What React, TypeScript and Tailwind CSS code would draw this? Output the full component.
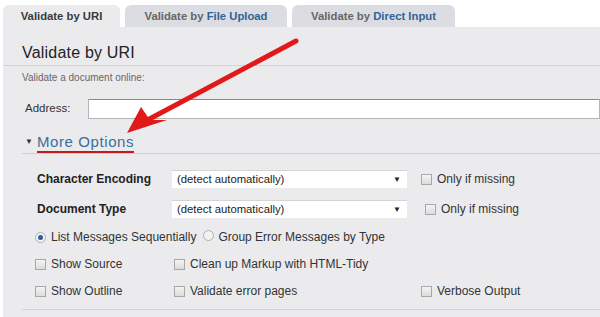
import React from "react";

const Checkbox = () => (
	<span className="inline-block w-[11px] h-[11px] border border-[#a8a8a8] bg-gradient-to-b from-[#f4f4f4] to-[#dcdcdc] shrink-0" />
);

const Radio = ({checked}: {checked?: boolean}) => (
	<span className="inline-flex items-center justify-center w-[11px] h-[11px] rounded-full border border-[#b0b0b0] bg-[#f2f2f2] shrink-0">
		{checked && <span className="w-[5px] h-[5px] rounded-full bg-[#2d5f9a]" />}
	</span>
);

const Select = () => (
	<div className="w-[235px] h-[18px] bg-white border-t border-[#d4d4d4] flex items-center justify-between pl-[5px] pr-[6px] text-[11.3px] text-[#222]">
		<span>(detect automatically)</span>
		<span className="text-[8px] leading-none">▼</span>
	</div>
);

export default function App() {
	return (
		<div className="relative w-[600px] h-[317px] overflow-hidden bg-white font-['Liberation_Sans',Arial,sans-serif]">
			{/* Tabs */}
			<div className="flex gap-[5px] pl-[3px] pt-[5px] h-[27px] text-[11.3px] font-bold">
				<div className="w-[117px] bg-[#ebebee] rounded-t-[6px] flex items-center justify-center text-[#3a3a3a]">
					Validate by URI
				</div>
				<div className="w-[162px] bg-[#dcdde2] rounded-t-[6px] flex items-center justify-center text-[#666]">
					Validate by&nbsp;<span className="text-[#2f6496]">File Upload</span>
				</div>
				<div className="w-[163px] bg-[#dcdde2] rounded-t-[6px] flex items-center justify-center text-[#666]">
					Validate by&nbsp;<span className="text-[#2f6496]">Direct Input</span>
				</div>
			</div>

			{/* Panel */}
			<div className="ml-[3px] h-[290px] bg-[#ebebee] pt-[16px]">
				<div className="border-b border-[#d3d3d8] pb-[2px] pl-[19px]">
					<h1 className="text-[16px] leading-[20px] text-[#222] tracking-[0.2px]">Validate by URI</h1>
				</div>
				<p className="pl-[19px] mt-[7px] text-[10px] leading-[10px] text-[#666]">
					Validate a document online:
				</p>

				<div className="flex items-center mt-[16px] h-[20px]">
					<span className="pl-[22px] w-[85px] text-[11.5px] text-[#333]">Address:</span>
					<div className="flex-1 h-[20px] bg-white border border-[#b5b5b5] border-t-[#8a8a8a]" />
				</div>

				<div className="ml-[19px] mt-[15px] border-b border-[#cfcfd4] flex items-end h-[20px]">
					<span className="ml-[3px] mb-[7px] text-[8px] text-[#333] leading-none">▼</span>
					<span className="ml-[4px] text-[15px] leading-[16px] text-[#3b6d9b] border-b-2 border-[#c41a1a] pb-[1px] tracking-[0.6px]">
						More Options
					</span>
				</div>

				{/* Options */}
				<div className="mt-[16px] text-[12px] text-[#333]">
					<div className="flex items-center h-[18px] pl-[34px]">
						<span className="w-[135px] font-bold text-[#222]">Character Encoding</span>
						<Select />
						<div className="ml-[14px] flex items-center gap-[5px]">
							<Checkbox />
							<span>Only if missing</span>
						</div>
					</div>
					<div className="flex items-center h-[18px] pl-[34px] mt-[12px]">
						<span className="w-[135px] font-bold text-[#222]">Document Type</span>
						<Select />
						<div className="ml-[18px] flex items-center gap-[5px]">
							<Checkbox />
							<span>Only if missing</span>
						</div>
					</div>

					<div className="flex items-center h-[14px] pl-[32px] mt-[12px]">
						<Radio checked />
						<span className="ml-[5px]">List Messages Sequentially</span>
						<span className="ml-[7px]">
							<Radio />
						</span>
						<span className="ml-[4px]">Group Error Messages by Type</span>
					</div>

					<div className="grid grid-cols-[139px_247px_1fr] pl-[32px] mt-[13px] gap-y-[13px]">
						<div className="flex items-center gap-[5px] h-[14px]">
							<Checkbox />
							<span>Show Source</span>
						</div>
						<div className="flex items-center gap-[5px] h-[14px]">
							<Checkbox />
							<span>Clean up Markup with HTML-Tidy</span>
						</div>
						<div />
						<div className="flex items-center gap-[5px] h-[14px]">
							<Checkbox />
							<span>Show Outline</span>
						</div>
						<div className="flex items-center gap-[5px] h-[14px]">
							<Checkbox />
							<span>Validate error pages</span>
						</div>
						<div className="flex items-center gap-[5px] h-[14px]">
							<Checkbox />
							<span>Verbose Output</span>
						</div>
					</div>

					<div className="ml-[19px] mt-[11px] border-b border-[#d3d3d8]" />
				</div>
			</div>

			{/* Red arrow annotation */}
			<svg className="absolute left-0 top-0 pointer-events-none" width="600" height="317">
				<line x1="296" y1="41" x2="140" y2="124" stroke="#e01a1a" strokeWidth="5" strokeLinecap="round" />
				<polygon points="127,133 141,107 150,120 167,120" fill="#e01a1a" />
			</svg>
		</div>
	);
}
